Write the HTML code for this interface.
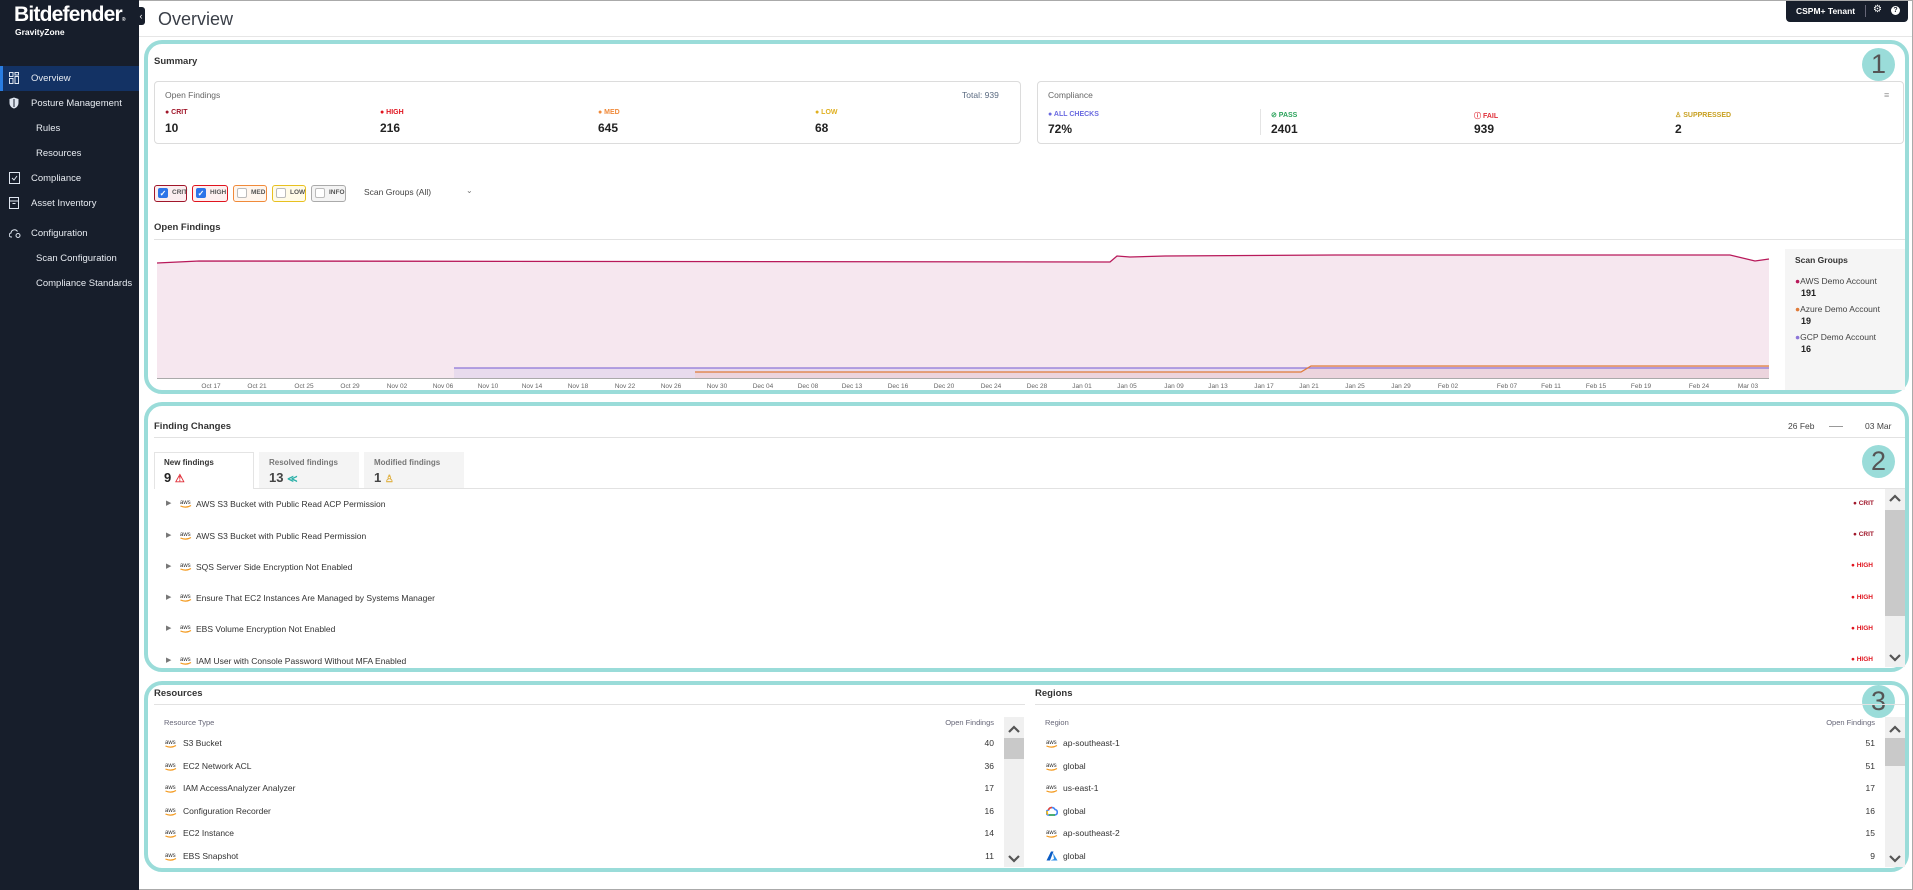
<!DOCTYPE html>
<html><head><meta charset="utf-8">
<style>
*{box-sizing:border-box;margin:0;padding:0}
body{width:1913px;height:890px;position:relative;overflow:hidden;background:#fff;font-family:"Liberation Sans",sans-serif;color:#222}
.a{position:absolute;white-space:nowrap}
#side{position:absolute;left:0;top:0;width:139px;height:890px;background:#171e2b}
.nav{position:absolute;left:0;width:139px;height:25px;color:#e8ecf2;font-size:9.5px;line-height:25px}
.nav span{position:absolute;left:31px}
.nav.sub span{left:36px}
.nav svg{position:absolute;left:9px;top:6px}
.box{position:absolute;border:4px solid #9adcd9;border-radius:18px}
.num{position:absolute;width:33px;height:33px;border-radius:50%;background:#9adcd9;color:#555;font-size:27px;line-height:33px;text-align:center;font-weight:normal}
.t{font-size:9.5px;font-weight:bold;color:#333}
.hl{position:absolute;height:1px;background:#e2e2e2}
.card{position:absolute;border:1px solid #dcdcdc;border-radius:4px}
.lab{font-size:7px;font-weight:bold}
.val{font-size:12px;font-weight:bold;color:#222}
.g{color:#666;font-size:8.5px}
.cb{position:absolute;top:185px;height:17px;border:1.5px solid;border-radius:3px;font-size:6.5px;font-weight:bold;line-height:14px;padding-left:17px;color:#555}
.cb i{position:absolute;left:3px;top:2px;width:10px;height:10px;border:1px solid #bbb;border-radius:2px;background:#fff;color:#fff;font-style:normal;font-size:8px;line-height:9px;text-align:center}
.cb i.on{background:#2d74e8;border-color:#2d74e8}
.ax{font-size:6.5px;color:#666;position:absolute;top:383px;transform:translateX(-50%)}
.row{position:absolute;font-size:8.5px;color:#333}
.sev{position:absolute;font-size:6.5px;font-weight:bold}
.sb{position:absolute;background:#f0f0f0;width:20px}
.sb .th{position:absolute;left:0;width:20px;background:#c9c9c9}
.sb svg{position:absolute;left:4px}
.tab{position:absolute;top:452px;width:100px;height:37px;background:#f4f4f4}
</style></head><body>
<div style="position:absolute;left:0;top:0;width:1913px;height:890px;border:1px solid #aaa;border-left:none"></div>
<div id="side">
 <div class="a" style="left:14px;top:3px;color:#fff;font-size:21px;font-weight:bold;letter-spacing:-0.8px">Bitdefender<span style="font-size:5px">®</span></div>
 <div class="a" style="left:15px;top:27px;color:#fff;font-size:8.5px;font-weight:bold">GravityZone</div>
 <div class="nav" style="top:66px;background:#133264;border-left:3px solid #2a7de1"><svg width="10" height="12" viewBox="0 0 10 12" style="left:6px"><g fill="none" stroke="#dfe6f0" stroke-width="1"><rect x=".5" y=".5" width="3.5" height="4"/><rect x="6" y=".5" width="3.5" height="2.5"/><rect x=".5" y="6.5" width="3.5" height="5"/><rect x="6" y="4.5" width="3.5" height="7"/></g></svg><span style="left:28px">Overview</span></div>
 <div class="nav" style="top:91px"><svg width="10" height="12" viewBox="0 0 10 12"><path d="M5 .5 9.5 2v4c0 3-2.5 5-4.5 5.5C3 11 .5 9 .5 6V2z" fill="#dfe6f0"/><path d="M5 2v8" stroke="#171e2b"/></svg><span>Posture Management</span></div>
 <div class="nav sub" style="top:116px"><span>Rules</span></div>
 <div class="nav sub" style="top:141px"><span>Resources</span></div>
 <div class="nav" style="top:166px"><svg width="11" height="12" viewBox="0 0 11 12"><rect x=".5" y=".5" width="10" height="11" fill="none" stroke="#dfe6f0"/><path d="M3 6l2 2 3-4" fill="none" stroke="#dfe6f0"/></svg><span>Compliance</span></div>
 <div class="nav" style="top:191px"><svg width="10" height="12" viewBox="0 0 10 12"><rect x=".5" y=".5" width="9" height="11" fill="none" stroke="#dfe6f0"/><path d="M.5 4h9M3.5 6.5h3" stroke="#dfe6f0"/></svg><span>Asset Inventory</span></div>
 <div class="nav" style="top:221px"><svg width="13" height="12" viewBox="0 0 13 12"><path d="M3 10H2.5A2 2 0 0 1 2 6a3.5 3.5 0 0 1 6.5-1.5" fill="none" stroke="#dfe6f0"/><circle cx="9" cy="8.5" r="2" fill="none" stroke="#dfe6f0"/></svg><span>Configuration</span></div>
 <div class="nav sub" style="top:246px"><span>Scan Configuration</span></div>
 <div class="nav sub" style="top:271px"><span>Compliance Standards</span></div>
</div>
<div class="a" style="left:137px;top:7px;width:8px;height:18px;background:#171e2b;border-radius:0 3px 3px 0;color:#fff;font-size:9px;line-height:18px;text-align:center">‹</div>
<div class="a" style="left:158px;top:9px;font-size:18px;color:#3a3f48">Overview</div>
<div class="hl" style="left:139px;top:36px;width:1773px;background:#e6e6e6"></div>
<div class="a" style="left:1786px;top:1px;width:122px;height:21px;background:#171e2b;border-radius:0 0 4px 4px"></div>
<div class="a" style="left:1796px;top:6px;color:#fff;font-size:8.5px;font-weight:bold">CSPM+ Tenant</div>
<div class="a" style="left:1865px;top:5px;width:1px;height:12px;background:#667"></div>
<div class="a" style="left:1873px;top:4px;color:#fff;font-size:10px">⚙</div>
<div class="a" style="left:1891px;top:6px;width:9px;height:9px;border-radius:50%;background:#fff;color:#171e2b;font-size:7px;font-weight:bold;text-align:center;line-height:9px">?</div>

<svg class="a" style="left:0;top:0" width="1913" height="890">
 <path d="M157,263 L199,261 L1110,262 L1117,256 L1130,257 L1165,256 L1335,255 L1730,255 L1755,261 L1769,259 L1769,378 L157,378Z" fill="#f6e7ef"/>
 <path d="M454,368 L1769,368 L1769,378 L454,378Z" fill="#e8dbed"/>
 <path d="M695,372 L1301,372 L1311,366 L1769,366 L1769,378 L695,378Z" fill="#ecd4dd"/>
 <path d="M157,263 L199,261 L1110,262 L1117,256 L1130,257 L1165,256 L1335,255 L1730,255 L1755,261 L1769,259" fill="none" stroke="#b8195a" stroke-width="1.3"/>
 <path d="M454,368 L1769,368" stroke="#8c75d8" stroke-width="1.3"/>
 <path d="M695,372 L1301,372 L1311,366 L1769,366" fill="none" stroke="#e07b3a" stroke-width="1.3"/>
 <path d="M157,378.5 L1769,378.5" stroke="#aaa"/>
</svg>

<div class="box" style="left:144px;top:40px;width:1765px;height:354px"></div>
<div class="num" style="left:1862px;top:48px">1</div>
<div class="a t" style="left:154px;top:56px">Summary</div>
<div class="card" style="left:154px;top:81px;width:867px;height:63px"></div>
<div class="a g" style="left:165px;top:90px">Open Findings</div>
<div class="a g" style="left:962px;top:90px;color:#5a6a80">Total: 939</div>
<div class="a lab" style="left:165px;top:109px;color:#a0162a">● CRIT</div><div class="a val" style="left:165px;top:121px">10</div>
<div class="a lab" style="left:380px;top:109px;color:#e0141e">● HIGH</div><div class="a val" style="left:380px;top:121px">216</div>
<div class="a lab" style="left:598px;top:109px;color:#f08a3a">● MED</div><div class="a val" style="left:598px;top:121px">645</div>
<div class="a lab" style="left:815px;top:109px;color:#e0b020">● LOW</div><div class="a val" style="left:815px;top:121px">68</div>
<div class="card" style="left:1037px;top:81px;width:867px;height:63px"></div>
<div class="a g" style="left:1048px;top:90px">Compliance</div>
<div class="a" style="left:1884px;top:90px;color:#999;font-size:9px">≡</div>
<div class="a lab" style="left:1048px;top:111px;color:#6a6ae0">● ALL CHECKS</div><div class="a val" style="left:1048px;top:122px">72%</div>
<div class="a" style="left:1260px;top:109px;width:1px;height:26px;background:#e4e4e4"></div>
<div class="a lab" style="left:1271px;top:111px;color:#2aa25a">⊘ PASS</div><div class="a val" style="left:1271px;top:122px">2401</div>
<div class="a lab" style="left:1474px;top:111px;color:#e0303a">ⓘ FAIL</div><div class="a val" style="left:1474px;top:122px">939</div>
<div class="a lab" style="left:1675px;top:111px;color:#c8a020">♙ SUPPRESSED</div><div class="a val" style="left:1675px;top:122px">2</div>

<div class="cb" style="left:154px;width:33px;border-color:#a0162a;background:#fbeef0"><i class="on">✓</i>CRIT</div>
<div class="cb" style="left:192px;width:36px;border-color:#e0141e;background:#fdf0f0"><i class="on">✓</i>HIGH</div>
<div class="cb" style="left:233px;width:34px;border-color:#f08a3a;background:#fff6ee"><i></i>MED</div>
<div class="cb" style="left:272px;width:34px;border-color:#e8c020;background:#fffbe8"><i></i>LOW</div>
<div class="cb" style="left:311px;width:35px;border-color:#aaa;background:#f4f4f4"><i></i>INFO</div>
<div class="a" style="left:364px;top:187px;font-size:8.5px;color:#444">Scan Groups (All)</div>
<div class="a" style="left:466px;top:186px;font-size:8px;color:#777">⌄</div>
<div class="a t" style="left:154px;top:222px">Open Findings</div>
<div class="hl" style="left:154px;top:239px;width:1751px"></div>

<div class="ax" style="left:211px">Oct 17</div><div class="ax" style="left:257px">Oct 21</div><div class="ax" style="left:304px">Oct 25</div><div class="ax" style="left:350px">Oct 29</div><div class="ax" style="left:397px">Nov 02</div><div class="ax" style="left:443px">Nov 06</div><div class="ax" style="left:488px">Nov 10</div><div class="ax" style="left:532px">Nov 14</div><div class="ax" style="left:578px">Nov 18</div><div class="ax" style="left:625px">Nov 22</div><div class="ax" style="left:671px">Nov 26</div><div class="ax" style="left:717px">Nov 30</div><div class="ax" style="left:763px">Dec 04</div><div class="ax" style="left:808px">Dec 08</div><div class="ax" style="left:852px">Dec 13</div><div class="ax" style="left:898px">Dec 16</div><div class="ax" style="left:944px">Dec 20</div><div class="ax" style="left:991px">Dec 24</div><div class="ax" style="left:1037px">Dec 28</div><div class="ax" style="left:1082px">Jan 01</div><div class="ax" style="left:1127px">Jan 05</div><div class="ax" style="left:1174px">Jan 09</div><div class="ax" style="left:1218px">Jan 13</div><div class="ax" style="left:1264px">Jan 17</div><div class="ax" style="left:1309px">Jan 21</div><div class="ax" style="left:1355px">Jan 25</div><div class="ax" style="left:1401px">Jan 29</div><div class="ax" style="left:1448px">Feb 02</div><div class="ax" style="left:1507px">Feb 07</div><div class="ax" style="left:1551px">Feb 11</div><div class="ax" style="left:1596px">Feb 15</div><div class="ax" style="left:1641px">Feb 19</div><div class="ax" style="left:1699px">Feb 24</div><div class="ax" style="left:1748px">Mar 03</div>

<div class="a" style="left:1785px;top:249px;width:120px;height:141px;background:#f5f5f5"></div>
<div class="a" style="left:1795px;top:255px;font-size:8.5px;color:#333;font-weight:bold">Scan Groups</div>
<div class="a" style="left:1795px;top:276px;font-size:8.5px;color:#444"><span style="color:#b8195a">●</span>AWS Demo Account</div><div class="a" style="left:1801px;top:288px;font-size:9px;font-weight:bold">191</div>
<div class="a" style="left:1795px;top:304px;font-size:8.5px;color:#444"><span style="color:#e07b3a">●</span>Azure Demo Account</div><div class="a" style="left:1801px;top:316px;font-size:9px;font-weight:bold">19</div>
<div class="a" style="left:1795px;top:332px;font-size:8.5px;color:#444"><span style="color:#8c75d8">●</span>GCP Demo Account</div><div class="a" style="left:1801px;top:344px;font-size:9px;font-weight:bold">16</div>

<div class="box" style="left:144px;top:402px;width:1765px;height:270px"></div>
<div class="num" style="left:1862px;top:445px">2</div>
<div class="a t" style="left:154px;top:421px">Finding Changes</div>
<div class="a" style="left:1788px;top:421px;font-size:8.5px;color:#444">26 Feb</div>
<div class="a" style="left:1829px;top:426px;width:14px;height:1px;background:#999"></div>
<div class="a" style="left:1865px;top:421px;font-size:8.5px;color:#444">03 Mar</div>
<div class="hl" style="left:154px;top:437px;width:1751px"></div>
<div class="tab" style="left:154px;background:#fff;border:1px solid #e4e4e4;border-bottom:none"></div>
<div class="tab" style="left:259px"></div>
<div class="tab" style="left:364px"></div>
<div class="hl" style="left:254px;top:488px;width:1651px"></div>
<div class="a" style="left:164px;top:458px;font-size:8px;font-weight:bold;color:#333">New findings</div>
<div class="a" style="left:164px;top:470px;font-size:13px;font-weight:bold">9 <span style="color:#e0303a;font-size:11px">⚠</span></div>
<div class="a" style="left:269px;top:458px;font-size:8px;font-weight:bold;color:#777">Resolved findings</div>
<div class="a" style="left:269px;top:470px;font-size:13px;font-weight:bold;color:#444">13 <span style="color:#2ab0a8;font-size:10px">≪</span></div>
<div class="a" style="left:374px;top:458px;font-size:8px;font-weight:bold;color:#777">Modified findings</div>
<div class="a" style="left:374px;top:470px;font-size:13px;font-weight:bold;color:#444">1 <span style="color:#e0b040;font-size:10px">♙</span></div>

<svg width="0" height="0" style="position:absolute"><defs>
<g id="aws"><text x="0" y="5" font-size="6" font-family="Liberation Sans" fill="#333">aws</text><path d="M0.5 7 Q6 9.5 11 6.5" stroke="#f39a1f" stroke-width="1.2" fill="none"/></g>
<path id="up" d="M1 7 6 2 11 7" fill="none" stroke="#555" stroke-width="2.2"/>
<path id="dn" d="M1 2 6 7 11 2" fill="none" stroke="#555" stroke-width="2.2"/>
</defs></svg>

<div class="row" style="left:166px;top:499px;color:#777;font-size:7px">▶</div><svg class="a" style="left:180px;top:499px" width="12" height="10"><use href="#aws"/></svg><div class="row" style="left:196px;top:499px">AWS S3 Bucket with Public Read ACP Permission</div><div class="sev" style="left:1853px;top:500px;color:#a0162a">● CRIT</div>
<div class="row" style="left:166px;top:531px;color:#777;font-size:7px">▶</div><svg class="a" style="left:180px;top:531px" width="12" height="10"><use href="#aws"/></svg><div class="row" style="left:196px;top:531px">AWS S3 Bucket with Public Read Permission</div><div class="sev" style="left:1853px;top:531px;color:#a0162a">● CRIT</div>
<div class="row" style="left:166px;top:562px;color:#777;font-size:7px">▶</div><svg class="a" style="left:180px;top:562px" width="12" height="10"><use href="#aws"/></svg><div class="row" style="left:196px;top:562px">SQS Server Side Encryption Not Enabled</div><div class="sev" style="left:1851px;top:562px;color:#e0141e">● HIGH</div>
<div class="row" style="left:166px;top:593px;color:#777;font-size:7px">▶</div><svg class="a" style="left:180px;top:593px" width="12" height="10"><use href="#aws"/></svg><div class="row" style="left:196px;top:593px">Ensure That EC2 Instances Are Managed by Systems Manager</div><div class="sev" style="left:1851px;top:594px;color:#e0141e">● HIGH</div>
<div class="row" style="left:166px;top:624px;color:#777;font-size:7px">▶</div><svg class="a" style="left:180px;top:624px" width="12" height="10"><use href="#aws"/></svg><div class="row" style="left:196px;top:624px">EBS Volume Encryption Not Enabled</div><div class="sev" style="left:1851px;top:625px;color:#e0141e">● HIGH</div>
<div class="row" style="left:166px;top:656px;color:#777;font-size:7px">▶</div><svg class="a" style="left:180px;top:656px" width="12" height="10"><use href="#aws"/></svg><div class="row" style="left:196px;top:656px">IAM User with Console Password Without MFA Enabled</div><div class="sev" style="left:1851px;top:656px;color:#e0141e">● HIGH</div>
<div class="sb" style="left:1885px;top:489px;height:178px"><div class="th" style="top:21px;height:106px"></div><svg style="top:5px" width="12" height="9"><use href="#up"/></svg><svg style="top:164px" width="12" height="9"><use href="#dn"/></svg></div>

<div class="box" style="left:144px;top:681px;width:1765px;height:191px"></div>
<div class="num" style="left:1862px;top:685px">3</div>
<div class="a t" style="left:154px;top:688px">Resources</div>
<div class="hl" style="left:154px;top:704px;width:871px"></div>
<div class="a t" style="left:1035px;top:688px">Regions</div>
<div class="hl" style="left:1035px;top:704px;width:870px"></div>
<div class="a" style="left:164px;top:718px;font-size:7.5px;color:#667">Resource Type</div>
<div class="a" style="left:934px;top:718px;font-size:7.5px;color:#667;width:60px;text-align:right">Open Findings</div>
<div class="a" style="left:1045px;top:718px;font-size:7.5px;color:#667">Region</div>
<div class="a" style="left:1815px;top:718px;font-size:7.5px;color:#667;width:60px;text-align:right">Open Findings</div>

<svg class="a" style="left:165px;top:739px" width="12" height="10"><use href="#aws"/></svg><div class="row" style="left:183px;top:738px">S3 Bucket</div><div class="row" style="left:954px;top:738px;width:40px;text-align:right">40</div>
<svg class="a" style="left:165px;top:762px" width="12" height="10"><use href="#aws"/></svg><div class="row" style="left:183px;top:761px">EC2 Network ACL</div><div class="row" style="left:954px;top:761px;width:40px;text-align:right">36</div>
<svg class="a" style="left:165px;top:784px" width="12" height="10"><use href="#aws"/></svg><div class="row" style="left:183px;top:783px">IAM AccessAnalyzer Analyzer</div><div class="row" style="left:954px;top:783px;width:40px;text-align:right">17</div>
<svg class="a" style="left:165px;top:807px" width="12" height="10"><use href="#aws"/></svg><div class="row" style="left:183px;top:806px">Configuration Recorder</div><div class="row" style="left:954px;top:806px;width:40px;text-align:right">16</div>
<svg class="a" style="left:165px;top:829px" width="12" height="10"><use href="#aws"/></svg><div class="row" style="left:183px;top:828px">EC2 Instance</div><div class="row" style="left:954px;top:828px;width:40px;text-align:right">14</div>
<svg class="a" style="left:165px;top:852px" width="12" height="10"><use href="#aws"/></svg><div class="row" style="left:183px;top:851px">EBS Snapshot</div><div class="row" style="left:954px;top:851px;width:40px;text-align:right">11</div>
<div class="sb" style="left:1004px;top:717px;height:150px"><div class="th" style="top:21px;height:21px"></div><svg style="top:8px" width="12" height="9"><use href="#up"/></svg><svg style="top:137px" width="12" height="9"><use href="#dn"/></svg></div>

<svg class="a" style="left:1046px;top:739px" width="12" height="10"><use href="#aws"/></svg><div class="row" style="left:1063px;top:738px">ap-southeast-1</div><div class="row" style="left:1835px;top:738px;width:40px;text-align:right">51</div>
<svg class="a" style="left:1046px;top:762px" width="12" height="10"><use href="#aws"/></svg><div class="row" style="left:1063px;top:761px">global</div><div class="row" style="left:1835px;top:761px;width:40px;text-align:right">51</div>
<svg class="a" style="left:1046px;top:784px" width="12" height="10"><use href="#aws"/></svg><div class="row" style="left:1063px;top:783px">us-east-1</div><div class="row" style="left:1835px;top:783px;width:40px;text-align:right">17</div>
<svg class="a" style="left:1046px;top:806px" width="12" height="10" viewBox="0 0 12 10"><path d="M3 9A2.5 2.5 0 0 1 2.5 4 3.5 3.5 0 0 1 9 3.5 2.8 2.8 0 0 1 9 9Z" fill="none" stroke="#4285f4" stroke-width="1.6"/><path d="M3 9H9" stroke="#34a853" stroke-width="1.6"/><path d="M2.5 4A3.5 3.5 0 0 1 6 1.5" stroke="#ea4335" stroke-width="1.6" fill="none"/><path d="M2 8.5A2.5 2.5 0 0 1 1.5 5" stroke="#fbbc05" stroke-width="1.6" fill="none"/></svg><div class="row" style="left:1063px;top:806px">global</div><div class="row" style="left:1835px;top:806px;width:40px;text-align:right">16</div>
<svg class="a" style="left:1046px;top:829px" width="12" height="10"><use href="#aws"/></svg><div class="row" style="left:1063px;top:828px">ap-southeast-2</div><div class="row" style="left:1835px;top:828px;width:40px;text-align:right">15</div>
<svg class="a" style="left:1046px;top:851px" width="12" height="10" viewBox="0 0 12 10"><path d="M5 0.5H7.5L4 9.5H0.5Z" fill="#0a5bc4"/><path d="M7 2 11.5 9.5H4.5L8 8Z" fill="#2a8ee8"/></svg><div class="row" style="left:1063px;top:851px">global</div><div class="row" style="left:1835px;top:851px;width:40px;text-align:right">9</div>
<div class="sb" style="left:1885px;top:717px;height:150px"><div class="th" style="top:21px;height:28px"></div><svg style="top:8px" width="12" height="9"><use href="#up"/></svg><svg style="top:137px" width="12" height="9"><use href="#dn"/></svg></div>
</body></html>
